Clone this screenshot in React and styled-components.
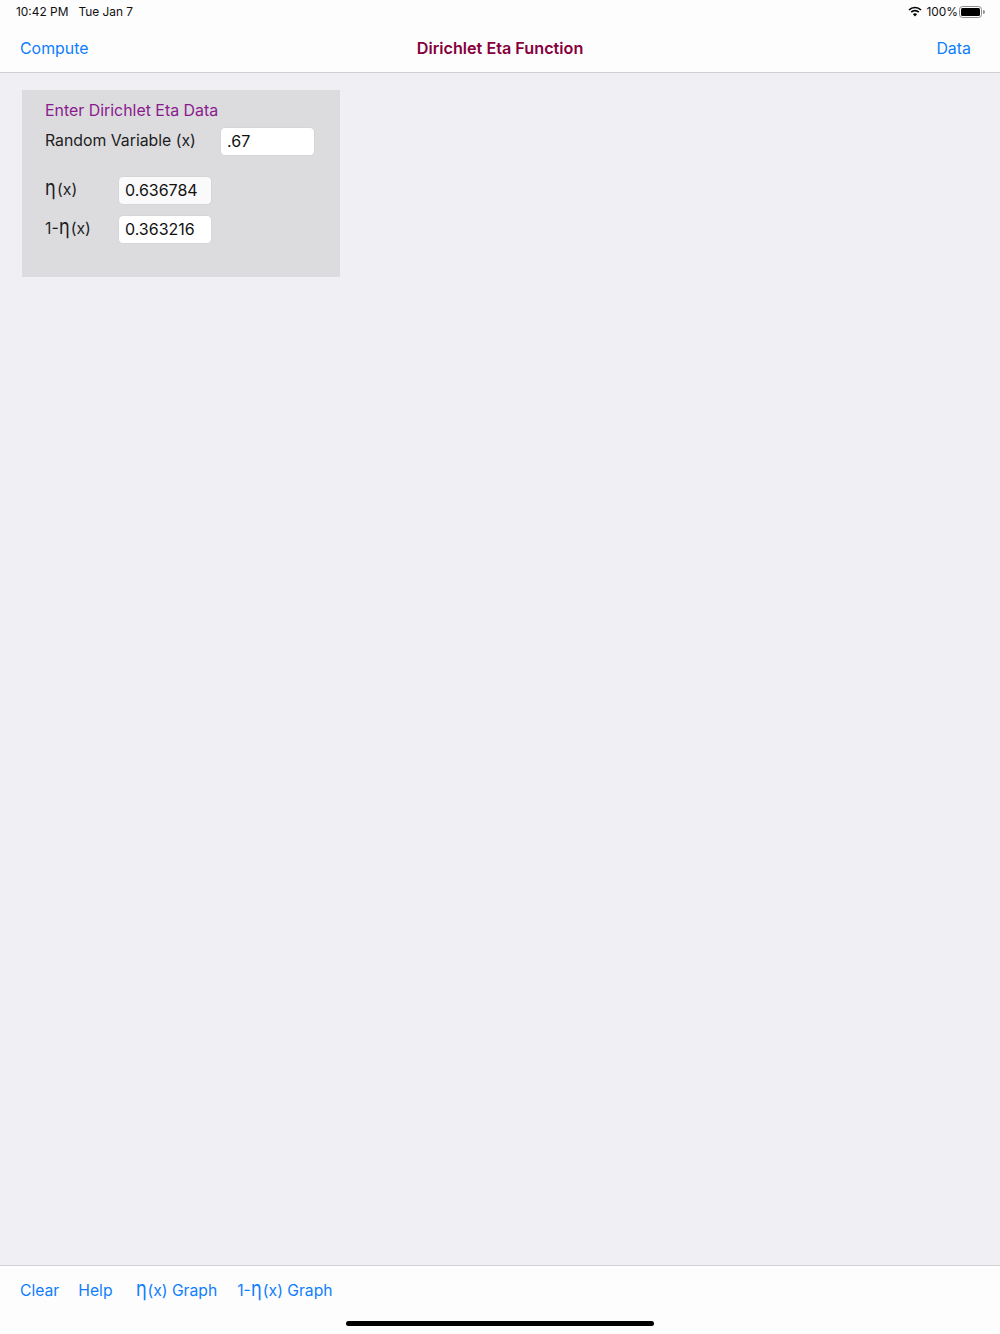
import React from "react";
import styled, { createGlobalStyle } from "styled-components";

const GlobalStyle = createGlobalStyle`
  html, body { margin: 0; padding: 0; }
  body { font-family: Inter, "Noto Sans", "Liberation Sans", sans-serif; background: #efeff4; }
`;

const Screen = styled.div`
  width: 1000px;
  height: 1334px;
  display: flex;
  flex-direction: column;
  background: #efeff4;
  overflow: hidden;
`;

const Header = styled.header`
  height: 73px;
  box-sizing: border-box;
  background: #fdfdfe;
  border-bottom: 1px solid #cfcfd3;
  flex-shrink: 0;
`;

const StatusBar = styled.div`
  height: 23px;
  display: flex;
  align-items: center;
  justify-content: space-between;
  padding: 0 15px 0 16px;
  font-size: 11.9px;
  color: #111;
`;

const StatusLeft = styled.div`
  display: flex;
  gap: 10px;
`;

const StatusRight = styled.div`
  display: flex;
  align-items: center;
  gap: 4px;
`;

const NavBar = styled.div`
  height: 49px;
  box-sizing: border-box;
  padding: 2px 29px 0 20px;
  display: flex;
  align-items: center;
  justify-content: space-between;
  position: relative;
`;

const LinkButton = styled.span`
  color: #0f7dfb;
  font-size: 15.9px;
`;

const Title = styled.div`
  position: absolute;
  left: 0;
  right: 0;
  top: 15px;
  text-align: center;
  color: #86003c;
  font-size: 16.2px;
  line-height: 20px;
  font-weight: 600;
`;

const Content = styled.main`
  flex: 1;
  padding: 17px 22px;
`;

const Panel = styled.section`
  width: 318px;
  height: 187px;
  box-sizing: border-box;
  background: #dcdcde;
  padding: 11px 25px 0 23px;
`;

const PanelTitle = styled.div`
  color: #8a1a8e;
  font-size: 15.9px;
  line-height: 20px;
`;

const Row = styled.div`
  display: flex;
  align-items: center;
  margin-top: ${(p) => p.$top}px;
`;

const Label = styled.div`
  width: ${(p) => p.$width}px;
  padding-bottom: 1px;
  font-size: 15.8px;
  line-height: 20px;
  color: #1c1c1e;
`;

const Eta = styled.span`
  display: inline-block;
  width: 12px;
  font-size: 21px;
  font-weight: 400;
  line-height: 0;
  transform: scaleX(0.86);
  transform-origin: left center;
`;

const Field = styled.div`
  width: ${(p) => p.$width}px;
  height: 29px;
  box-sizing: border-box;
  padding-left: 6px;
  background: ${(p) => p.$bg || "#fff"};
  border: 1px solid #d6d6d8;
  border-radius: 5px;
  font-size: 16px;
  line-height: 27px;
  color: #111;
`;

const Toolbar = styled.footer`
  height: 69px;
  flex-shrink: 0;
  box-sizing: border-box;
  background: #fdfdfe;
  border-top: 1px solid #d4d4d8;
  display: flex;
  flex-direction: column;
  align-items: center;
`;

const ToolbarItems = styled.div`
  align-self: stretch;
  height: 49px;
  display: flex;
  align-items: center;
  padding-left: 20px;
`;

const ToolButton = styled(LinkButton)`
  font-size: 15.7px;
  margin-right: ${(p) => p.$gap}px;
`;

const HomeBar = styled.div`
  width: 308px;
  height: 5px;
  margin-top: 6px;
  border-radius: 3px;
  background: #000;
`;

const BatterySvg = styled.svg`
  margin-left: -3px;
`;

const WifiIcon = () => (
  <svg width="14" height="11" viewBox="0 0 14 11">
    <path d="M1 4 a8.5 8.5 0 0 1 12 0" fill="none" stroke="#000" strokeWidth="1.7" />
    <path d="M3.2 6.2 a5.4 5.4 0 0 1 7.6 0" fill="none" stroke="#000" strokeWidth="1.7" />
    <path d="M7 10.5 L4.9 8.2 a3 3 0 0 1 4.2 0 Z" fill="#000" />
  </svg>
);

const BatteryIcon = () => (
  <BatterySvg width="26" height="12" viewBox="0 0 26 12">
    <rect x="0.5" y="0.5" width="22" height="11" rx="3" fill="none" stroke="#8e8e90" />
    <rect x="2" y="2" width="19" height="8" rx="1.5" fill="#000" />
    <path d="M24 4 a2 2 0 0 1 0 4 Z" fill="#8e8e90" />
  </BatterySvg>
);

const App = () => {
  return (
    <Screen>
      <GlobalStyle />
      <Header>
        <StatusBar>
          <StatusLeft>
            <span>10:42 PM</span>
            <span>Tue Jan 7</span>
          </StatusLeft>
          <StatusRight>
            <WifiIcon />
            <span>100%</span>
            <BatteryIcon />
          </StatusRight>
        </StatusBar>
        <NavBar>
          <LinkButton>Compute</LinkButton>
          <Title>Dirichlet Eta Function</Title>
          <LinkButton>Data</LinkButton>
        </NavBar>
      </Header>
      <Content>
        <Panel>
          <PanelTitle>Enter Dirichlet Eta Data</PanelTitle>
          <Row $top={6}>
            <Label $width={175}>Random Variable (x)</Label>
            <Field $width={95}>.67</Field>
          </Row>
          <Row $top={20}>
            <Label $width={73}><Eta>η</Eta>(x)</Label>
            <Field $width={94} $bg="#fafafa">0.636784</Field>
          </Row>
          <Row $top={10}>
            <Label $width={73}>1-<Eta>η</Eta>(x)</Label>
            <Field $width={94}>0.363216</Field>
          </Row>
        </Panel>
      </Content>
      <Toolbar>
        <ToolbarItems>
          <ToolButton $gap={19}>Clear</ToolButton>
          <ToolButton $gap={23}>Help</ToolButton>
          <ToolButton $gap={20}><Eta>η</Eta>(x) Graph</ToolButton>
          <ToolButton $gap={0}>1-<Eta>η</Eta>(x) Graph</ToolButton>
        </ToolbarItems>
        <HomeBar />
      </Toolbar>
    </Screen>
  );
};

export default App;
